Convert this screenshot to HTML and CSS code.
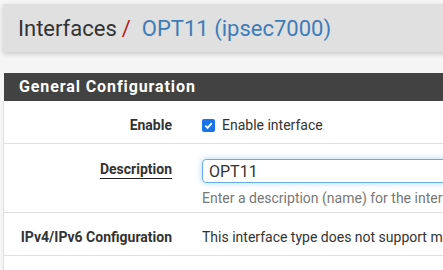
FILE: index.html
```html
<!DOCTYPE html>
<html lang="en">
<head>
    <meta charset="utf-8">
    <title>Interfaces / OPT11</title>
    <link rel="stylesheet" href="styles.css">
</head>
<body>
<div class="crumbs">
    <span class="crumb">Interfaces</span><span class="sep">/</span><span class="crumb-active">OPT11 (ipsec7000)</span>
</div>

<div class="panel">
    <div class="panel-heading">General Configuration</div>
    <div class="panel-body">
        <div class="row">
            <div class="label-col"><span class="label">Enable</span></div>
            <div class="control-col">
                <label class="check">
                    <span class="box">
                        <svg width="9" height="9" viewBox="0 0 10 10"><path d="M1.5 5.2 L4 7.6 L8.6 2.4" fill="none" stroke="#fff" stroke-width="2"/></svg>
                    </span>
                    Enable interface
                </label>
            </div>
        </div>
        <div class="row row-desc">
            <div class="label-col"><span class="label underlined">Description</span></div>
            <div class="control-col">
                <div class="input">OPT11</div>
                <div class="help">Enter a description (name) for the interface here.</div>
            </div>
        </div>
        <div class="row">
            <div class="label-col"><span class="label">IPv4/IPv6 Configuration</span></div>
            <div class="control-col">
                <span class="text">This interface type does not support manual address configuration on this page.</span>
            </div>
        </div>
        <div class="row row-empty"></div>
    </div>
</div>
</body>
</html>
```

FILE: styles.css
```css
body {
    margin: 0;
    padding: 4px 0 0 0;
    font-family: Roboto, "Liberation Sans", sans-serif;
    font-size: 14px;
    color: #212121;
    background-color: #f5f5f5;
    overflow: hidden;
    width: 443px;
    height: 270px;
}

.crumbs {
    margin-left: 3px;
    width: 900px;
    height: 48px;
    background-color: #e0e0e0;
    box-shadow: 0 2px 5px rgba(0, 0, 0, 0.18);
    display: flex;
    align-items: center;
    padding-left: 15px;
    font-size: 22px;
    white-space: nowrap;
}

.crumb {
    color: #333;
}

.sep {
    color: #b71c1c;
    margin: 0 11px 0 5px;
}

.crumb-active {
    color: #3e7cb8;
}

.panel {
    margin: 21px 0 0 4px;
    width: 900px;
    background-color: #fff;
}

.panel-heading {
    background-color: #424242;
    color: #fff;
    font-size: 16px;
    font-weight: bold;
    height: 28px;
    line-height: 28px;
    padding-left: 15px;
    letter-spacing: 0.9px;
}

.panel-body {
    border-left: 1px solid #ddd;
    margin-left: -1px;
}

.row {
    display: flex;
    align-items: center;
    border-bottom: 1px solid #e0e0e0;
    height: 42px;
    box-sizing: content-box;
}

.row .label-col,
.row .control-col {
    padding-top: 6px;
}

.row-desc {
    height: 68px;
    align-items: flex-start;
}

.row-empty {
    border-bottom: none;
}

.label-col {
    width: 183px;
    text-align: right;
    padding-right: 15px;
    box-sizing: border-box;
    flex: none;
}

.label {
    font-weight: bold;
    color: #333;
}

.underlined {
    border-bottom: 1px solid #212121;
    padding-bottom: 1px;
}

.row-desc .label-col {
    padding-top: 17px;
}

.control-col {
    padding-left: 15px;
    white-space: nowrap;
}

.row-desc .control-col {
    padding-top: 15px;
}

.check {
    display: flex;
    align-items: center;
    gap: 7px;
    color: #333;
}

.box {
    width: 13px;
    height: 13px;
    border-radius: 2px;
    background-color: #1a73e8;
    display: flex;
    align-items: center;
    justify-content: center;
}

.input {
    width: 500px;
    height: 22px;
    border: 1px solid #66afe9;
    border-radius: 4px;
    box-shadow: 0 0 6px rgba(102, 175, 233, 0.5);
    padding-left: 6px;
    line-height: 23px;
    font-size: 16px;
    color: #333;
}

.help {
    margin-top: 7px;
    color: #777;
}

.text {
    color: #333;
}
```
